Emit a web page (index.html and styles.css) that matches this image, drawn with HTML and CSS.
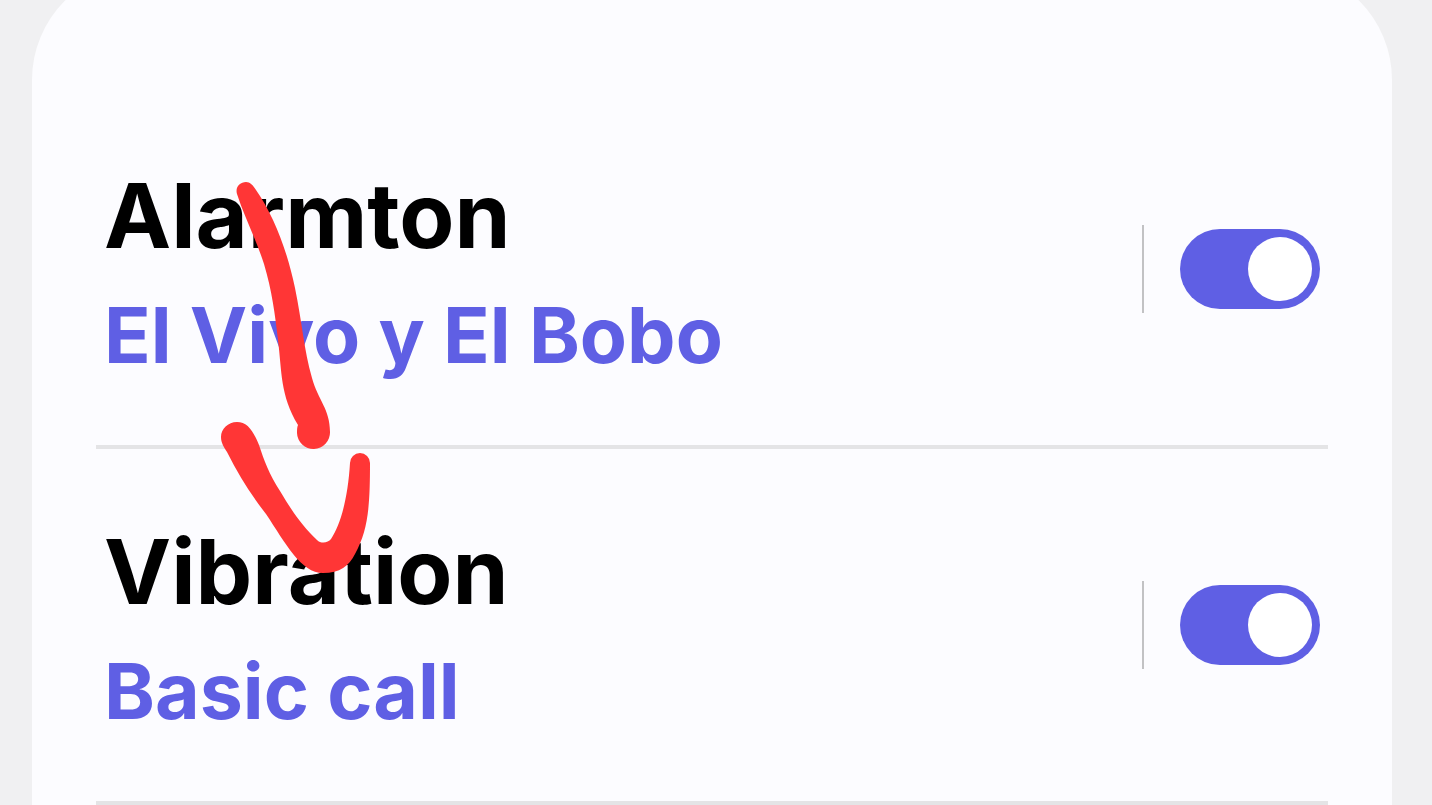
FILE: index.html
```html
<!DOCTYPE html>
<html lang="en">
<head>
    <meta charset="UTF-8">
    <meta name="viewport" content="width=device-width, initial-scale=1.0">
    <title>Alarm settings</title>
    <link rel="stylesheet" href="styles.css">
</head>
<body>
    <main class="card">
        <div class="row">
            <label class="row-text" for="sound-switch">
                <span class="title">Alarmton</span>
                <span class="value">El Vivo y El Bobo</span>
            </label>
            <div class="row-control">
                <input type="checkbox" class="switch" id="sound-switch" checked>
            </div>
        </div>

        <div class="row">
            <label class="row-text" for="vibration-switch">
                <span class="title">Vibration</span>
                <span class="value">Basic call</span>
            </label>
            <div class="row-control">
                <input type="checkbox" class="switch" id="vibration-switch" checked>
            </div>
        </div>
    </main>

    <!-- Hand-drawn arrow -->
    <svg class="arrow" width="160" height="400" viewBox="216 178 160 400" aria-hidden="true">
        <path d="M246 182 C240 182 235 187 237 194 C244 216 256 239 264 264 C272 291 275 314 278 340 C282 372 280 395 298 425 C297 427 297 430 297 433 A16 16 0 0 0 330 432 C330 409 318 400 312 378 C304 350 302 322 295 288 C287 250 274 216 256 190 C253 185 250 182 246 182 Z"/>
        <path d="M237 422 C228 422 221 429 221 437 C221 443 224 447 227 452 C239 476 252 496 266 514 C286 544 301 573 323 573 C340 573 349 566 355 554 C368 530 370 508 370 463 A10 10 0 0 0 350 463 C348 497 341 524 331 539 C328 543 321 544 317 540 C302 526 292 511 280 491 C269 474 264 460 259 445 C253 430 247 422 237 422 Z"/>
    </svg>
</body>
</html>
```
FILE: styles.css
```css
* {
    box-sizing: border-box;
}

body {
    margin: 0;
    min-height: 100vh;
    position: relative;
    display: flex;
    overflow: hidden;
    background-color: #f0f0f2;
    font-family: Inter, Roboto, sans-serif;
}

/* Card, its top edge sits above the view */
.card {
    flex: 1;
    margin: -32px 40px 0 32px;
    padding: 125px 64px 0;
    background-color: #fcfcff;
    border-radius: 112px 112px 0 0;
}

.row {
    display: flex;
    align-items: center;
    justify-content: space-between;
    padding: 57px 8px;
    border-bottom: 4px solid #e4e4e6;
}

.row-text {
    display: flex;
    flex-direction: column;
    font-weight: 700;
    white-space: nowrap;
}

.title {
    font-size: 90px;
    line-height: 132px;
    color: #000;
}

.value {
    font-size: 77px;
    line-height: 106px;
    color: #5f5fe4;
}

.row-control {
    display: flex;
    align-items: center;
    height: 88px;
    padding-left: 36px;
    border-left: 2px solid #c2c2c4;
}

/* Switch */
.switch {
    appearance: none;
    display: flex;
    align-items: center;
    width: 140px;
    height: 80px;
    margin: 0;
    padding: 8px;
    border-radius: 40px;
    background-color: #b4b4b8;
    cursor: pointer;
}

.switch::before {
    content: "";
    width: 64px;
    height: 64px;
    border-radius: 50%;
    background-color: #fff;
}

.switch:checked {
    justify-content: flex-end;
    background-color: #5f5fe4;
}

/* Arrow drawn over the rows */
.arrow {
    position: absolute;
    top: 178px;
    left: 216px;
    fill: #ff3636;
    pointer-events: none;
}
```
